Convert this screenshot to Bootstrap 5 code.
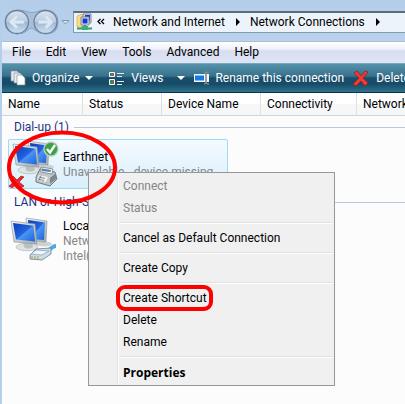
<!DOCTYPE html>
<html lang="en">
<head>
<meta charset="utf-8">
<meta name="viewport" content="width=device-width, initial-scale=1">
<title>Network Connections</title>
<link href="https://cdn.jsdelivr.net/npm/bootstrap@5.3.0/dist/css/bootstrap.min.css" rel="stylesheet">
<style>
body{font-family:Roboto,"Open Sans",sans-serif;font-size:12px;line-height:15px;color:#000;background:#b5cfeb;min-height:100vh;padding-left:2px}
button{font:inherit;white-space:nowrap}
svg{flex:none;display:block}
.plain{background:none;border:0;padding:0;color:inherit;text-align:left}
.topbar{height:41px;padding:11px 0 9px 2px;background:linear-gradient(#b4cee9,#b9d1ec)}
.address{height:22px;border:1px solid #8499ae;border-top:2px solid #5c6c7e;border-right:0;background:#edf3fb;padding-left:2px}
.address .plain{line-height:18px}
.crumbs{margin-left:4px}
.menubar{height:22px;padding-left:10px;gap:15px;background:linear-gradient(#fff 0,#eef1fa 7px,#d8def0 9px,#dee5f6 100%);border-top:1px solid #a9bfd8}
.toolbar{height:30px;padding-left:8px;color:#fff;border-top:1px solid #78a9bb;border-bottom:1px solid #0b3350;background:linear-gradient(#5592ab 0,#39718d 12px,#1a4f6c 14px,#174b69 20px,#2e7289 100%);overflow:hidden}
.tool{gap:6px}
.files{table-layout:fixed;width:452px;margin:0;border-collapse:separate;border-spacing:0}
.files th{height:23px;padding:1px 0 0 6px;font-weight:400;border-bottom:1px solid #d5d5d5;border-right:1px solid #dedfe1;background:linear-gradient(#fff 50%,#f6f7f9 51%);white-space:nowrap}
.files td{padding:0}
.c1{width:81px}.c2{width:79px}.c3{width:99px}.c4{width:96px}.c5{width:97px}
.pane{background:#fcfcfc;overflow:hidden}
.group{color:#1e3287;height:23px;padding-left:12px;gap:5px;white-space:nowrap}
.group.second{height:26px}
.group i{height:1px;background:#b9c7e2;flex:1}
.entry{margin-left:6px;width:220px;height:50px;border:1px solid transparent;border-radius:2px;white-space:nowrap;gap:4px}
.entry.picked{border-color:#99dbf8;background:linear-gradient(#f4faff,#d9effb)}
.entry .label{padding-top:2px}
.dim{color:#868686}
.context{position:absolute;left:88px;top:172px;width:247px;border:1px solid #979797;background:#f0f0f0;padding:2px;z-index:2}
.context .inner{border-left:1px solid #e2e3e3;margin-left:26px;box-shadow:inset 1px 0 #fff}
.context button{height:22px;padding:1px 0 0 5px;display:block;width:100%}
.context .fw-bold{font-family:"Open Sans",sans-serif;padding-top:0}
.context hr{margin:3px 0 3px 2px;border:0;border-top:1px solid #e0e0e0;border-bottom:1px solid #fff;opacity:1;height:2px}
.ring{position:absolute;z-index:3;pointer-events:none}
.oval{left:6px;top:129px}
.box{left:116px;top:285px;width:97px;height:26px;border:4px solid #f00;border-radius:9px}
</style>
<script src="https://cdn.jsdelivr.net/npm/bootstrap@5.3.0/dist/js/bootstrap.bundle.min.js"></script>
</head>
<body class="d-flex flex-column overflow-hidden position-relative">
<svg width="0" height="0" class="position-absolute" aria-hidden="true">
<defs>
<linearGradient id="scr" x2="1" y2="1"><stop stop-color="#0a3cba"/><stop offset=".5" stop-color="#2264df"/><stop offset=".55" stop-color="#4b94f4"/><stop offset="1" stop-color="#1b63dc"/></linearGradient>
<linearGradient id="bez" x2="1" y2="1"><stop stop-color="#f4f5f5"/><stop offset="1" stop-color="#a3a9ac"/></linearGradient>
<linearGradient id="orb" x2="0" y2="1"><stop stop-color="#d9e5f2"/><stop offset=".48" stop-color="#b8cce2"/><stop offset=".52" stop-color="#9fb8d2"/><stop offset="1" stop-color="#cfe2f5"/></linearGradient>
<g id="pcs">
<ellipse cx="33" cy="26" rx="8" ry="2.500" fill="#cdd2d4"/>
<path d="M15 0l21 3-1 21-18-1z" fill="url(#bez)" stroke="#8c9599" stroke-width=".6"/>
<path d="M17 2l17 2.500-1 17.500-15-1z" fill="url(#scr)"/>
<ellipse cx="16" cy="29" rx="11" ry="3.800" fill="#dfe3e4" stroke="#a9b0b3" stroke-width=".6"/>
<path d="M12 24h9l1 5c-3 2-7 2-9 0z" fill="#b9c0c3"/>
<path d="M0 3l24 3 2 20L3 24z" fill="url(#bez)" stroke="#899296" stroke-width=".6"/>
<path d="M2 5l20.500 2.800L24 23.500 5 21.500z" fill="url(#scr)"/>
</g>
</defs>
</svg>

<header class="topbar d-flex align-items-center">
<button class="plain" aria-label="Back and forward">
<svg width="69" height="28" viewBox="0 0 69 28"><path d="M13 2Q20 2 24 4Q28 5 32 4Q36 2 42 2Q54 3 54 14Q54 26 42 26Q35 26 31 22Q27 18 24 22Q20 26 13 26Q1 25 1 14Q1 3 13 2z" fill="#a8bfd8" stroke="#8aa4c0"/><circle cx="13" cy="14" r="11.500" fill="url(#orb)" stroke="#6b819c" stroke-width="1.300"/><circle cx="41.500" cy="14" r="11.500" fill="url(#orb)" stroke="#6b819c" stroke-width="1.300"/><path d="M5 14l7-7 2 2-3 3.500h9v3h-9l3 3.500-2 2zM49.500 14l-7-7-2 2 3 3.500h-9v3h9l-3 3.500 2 2z" fill="#dce8f4" stroke="#c6d7e9" stroke-width=".7"/><path d="M58 12.500h7L61.500 16z" fill="#d5e5f5" stroke="#7e96b1"/></svg>
</button>
<div class="address d-flex align-items-center flex-fill overflow-hidden">
<svg width="17" height="18" viewBox="0 0 17 18"><path d="M1 3l5-2 2 2v11H1z" fill="#f5df82" stroke="#c7a74a" stroke-width=".6"/><path d="M7 1h8v9H7z" fill="#d7dbe5" stroke="#818795"/><path d="M9 2h5v6H9z" fill="#1b39c8"/><path d="M5 4h8v8H5z" fill="#e4e7ee" stroke="#7c8490"/><path d="M6.500 5.500h5v5h-5z" fill="#1238d6"/><path d="M9 12v3M1 15.500h15" stroke="#2d9f73" stroke-width="2"/><path d="M6 13h6v4H6z" fill="#35b17d"/></svg>
<button class="plain crumbs" aria-label="More locations"><svg width="8" height="8" viewBox="0 0 8 8"><path d="M3.500 1L1 3.500 3.500 6M7 1L4.500 3.500 7 6" fill="none" stroke="#000" stroke-width="1.300"/></svg></button>
<button class="plain ms-2">Network and Internet</button>
<svg class="ms-2 me-1" width="9" height="8" viewBox="0 0 9 8"><path d="M3 0l4 4-4 4z"/></svg>
<button class="plain ms-1">Network Connections</button>
<svg class="ms-2" width="9" height="8" viewBox="0 0 9 8"><path d="M3 0l4 4-4 4z"/></svg>
</div>
</header>

<nav class="menubar d-flex align-items-center">
<button class="plain">File</button><button class="plain">Edit</button><button class="plain">View</button><button class="plain">Tools</button><button class="plain">Advanced</button><button class="plain">Help</button>
</nav>

<div class="toolbar d-flex align-items-center" role="toolbar" aria-label="Commands">
<button class="plain tool d-flex align-items-center">
<svg width="16" height="16" viewBox="0 0 16 16"><g fill="#e9edf0" stroke="#7f929f" stroke-width=".7"><path d="M1 1h6l2 2v8H1z"/><path d="M4 3h6l2 2v8H4z"/><path d="M7 5h5l3 3v7H7z" fill="#fff"/></g></svg>
<span>Organize</span><svg width="8" height="4" viewBox="0 0 8 4"><path d="M0 0h8L4 4z" fill="#fff"/></svg></button>
<button class="plain tool d-flex align-items-center ms-3">
<svg width="16" height="15" viewBox="0 0 16 15"><path d="M.5 1.500h5v4h-5zM.5 8.500h5v5h-5z" fill="#3a8a52" stroke="#fff"/><path d="M2 3h3M3 10h2" stroke="#de4141" stroke-width="1.500"/><path d="M8 2.500h7M8 5.500h5M8 10.500h7M8 13.500h5" stroke="#e5edf0"/></svg>
<span>Views</span><svg class="ms-2" width="8" height="4" viewBox="0 0 8 4"><path d="M0 0h8L4 4z" fill="#fff"/></svg></button>
<button class="plain d-flex align-items-center gap-1 ms-2">
<svg width="18" height="16" viewBox="0 0 18 16"><path d="M1 4h15v8H1z" fill="#f4f6f7"/><path d="M2 5.500h9v5H2z" fill="#177ae5"/><path d="M11 2q2 0 2 2v8q0 2-2 2M16 2q-3 0-3 2M16 14q-3 0-3-2" fill="none" stroke="#7c878f" stroke-width="1.500"/></svg>
<span>Rename this connection</span></button>
<button class="plain tool d-flex align-items-center ms-2">
<svg width="18" height="17" viewBox="0 0 18 17"><path d="M2 3l3-2 4 5 4-5 3 1-5 6 5 5-3 3-4-5-5 5-3-2 6-6z" fill="#ef3b35" stroke="#a8191b" stroke-width=".8"/></svg>
<span>Delete this connection</span></button>
</div>

<main class="pane flex-fill">
<table class="files">
<colgroup><col class="c1"><col class="c2"><col class="c3"><col class="c4"><col class="c5"></colgroup>
<thead><tr><th scope="col">Name</th><th scope="col">Status</th><th scope="col">Device Name</th><th scope="col">Connectivity</th><th scope="col">Network Category</th></tr></thead>
<tbody>
<tr><td colspan="5"><div class="group d-flex align-items-center">Dial-up (1)<i></i></div></td></tr>
<tr><td colspan="5"><div class="entry picked d-flex align-items-center">
<svg width="50" height="48" viewBox="0 0 50 48"><g transform="translate(4 1)"><use href="#pcs"/></g>
<path d="M27 37l4-8 15 3 2 7-7 7-14-4z" fill="#bfc5c8" stroke="#596268" stroke-width=".8"/><path d="M32 27l12 2-1 5-11-2z" fill="#f4f5f6" stroke="#6c757a" stroke-width=".7"/><path d="M33 28.500l9 1.500-.5 2L33 31z" fill="#5683ad"/><path d="M30 35l9 2-2 5-9-2z" fill="#eef1f2"/><path d="M30 37l6 1.500M29 39l6 1.500M32 35.500l-2 5" stroke="#59646b" stroke-width=".7"/><path d="M41 38l6-5v6l-6 5z" fill="#7d878c"/>
<circle cx="42" cy="9" r="7" fill="#39a348" stroke="#c3cec4" stroke-width="1.300"/><path d="M38 9l3 3.500L46 5" fill="none" stroke="#fff" stroke-width="2.400"/>
<path d="M1 37l3-1 4 4 4-4 3 1-5 5 5 4-3 2-4-4-5 4-3-2 6-5z" fill="#e8282a" stroke="#a91c1e" stroke-width=".7"/></svg>
<div class="label"><div>Earthnet</div><div class="dim">Unavailable - device missing</div></div></div></td></tr>
<tr><td colspan="5"><div class="group second d-flex align-items-center">LAN or High-Speed Internet (1)<i></i></div></td></tr>
<tr><td colspan="5"><div class="entry d-flex align-items-center">
<svg width="50" height="48" viewBox="0 0 50 48"><g transform="translate(2 2)"><use href="#pcs"/></g><path d="M39 35q5-5 8-5" stroke="#4daada" stroke-width="4" fill="none"/><path d="M21 39l6-6 15-1v6l-9 6-12-1z" fill="#ccdde8" stroke="#60829c" stroke-width=".8"/><path d="M27 34l13 1-7 4-11-1z" fill="#f0f6fa" stroke="#7590a4" stroke-width=".6"/><path d="M23 40v3M26 40v3M29 40v4" stroke="#b59a4b"/></svg>
<div class="label"><div>Local Area Connection</div><div class="dim">Network</div><div class="dim">Intel(R) PRO/1000</div></div></div></td></tr>
</tbody>
</table>
</main>

<div class="context" role="menu"><div class="inner">
<button class="plain dim" role="menuitem" disabled>Connect</button>
<button class="plain dim" role="menuitem" disabled>Status</button>
<hr>
<button class="plain" role="menuitem">Cancel as Default Connection</button>
<hr>
<button class="plain" role="menuitem">Create Copy</button>
<hr>
<button class="plain" role="menuitem">Create Shortcut</button>
<button class="plain" role="menuitem">Delete</button>
<button class="plain" role="menuitem">Rename</button>
<hr>
<button class="plain fw-bold" role="menuitem">Properties</button>
</div></div>
<svg class="ring oval" width="112" height="78" viewBox="0 0 112 78"><ellipse cx="56" cy="38.500" rx="53" ry="35" fill="none" stroke="#f00" stroke-width="4"/></svg>
<div class="ring box"></div>
</body>
</html>
